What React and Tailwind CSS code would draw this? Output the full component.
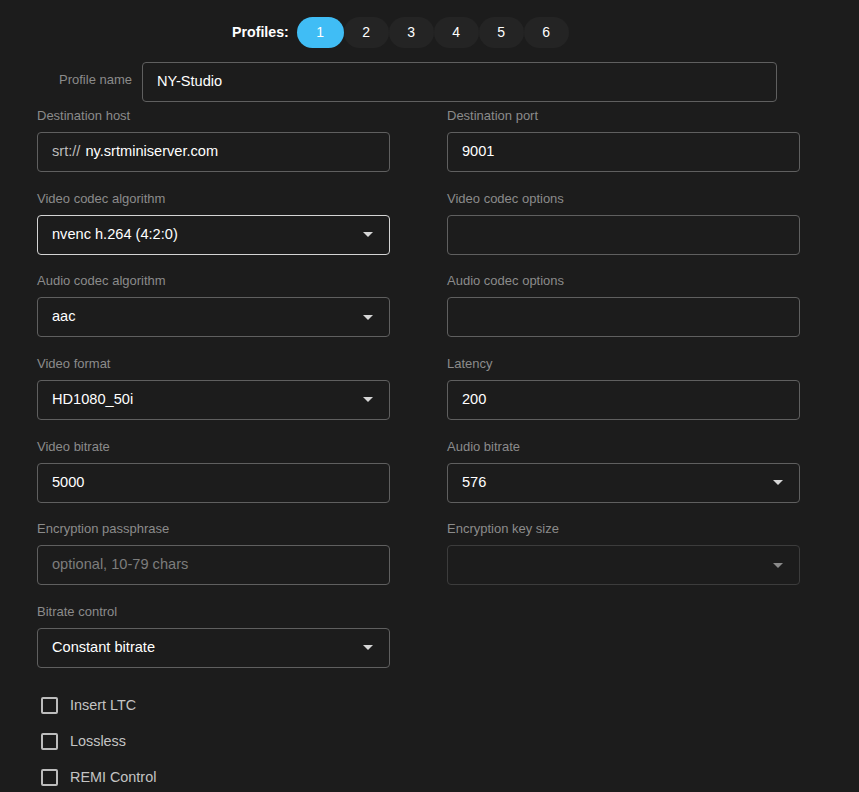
const font = { fontFamily: '"Liberation Sans", Arial, sans-serif' };

function Caret({ muted }) {
  return (
    <svg width="10" height="5" viewBox="0 0 10 5" className="shrink-0">
      <path d="M0 0 L10 0 L5 5 Z" fill={muted ? "#8a8a8a" : "#d6d6d6"} />
    </svg>
  );
}

function Field({ label, value, prefix, placeholder, select, focused, disabled }) {
  const border = focused
    ? "border-[#d4d4d4]"
    : disabled
    ? "border-[#3c3c3c]"
    : "border-[#5f5f5f]";
  return (
    <div className="flex flex-col">
      <div className="h-4 text-[13px] leading-4 text-[#8b8b8b]">{label}</div>
      <div
        className={`mt-2 h-[40px] border ${border} rounded-[4px] flex items-center pl-[14px] pr-[16px] text-[14.6px]`}
      >
        <div className="flex-1 truncate">
          {prefix && <span className="text-[#bdbdbd] mr-[5px]">{prefix}</span>}
          {value ? (
            <span className="text-white">{value}</span>
          ) : (
            <span className="text-[#7d7d7d]">{placeholder}</span>
          )}
        </div>
        {select && <Caret muted={disabled} />}
      </div>
    </div>
  );
}

function Check({ label }) {
  return (
    <div className="flex items-center h-[36px]">
      <div className="w-[17px] h-[17px] border-2 border-[#bdbdbd] rounded-[2px] ml-[4px]" />
      <span className="ml-[12px] text-[14.4px] text-[#c4c4c4]">{label}</span>
    </div>
  );
}

export default function App() {
  const profiles = ["1", "2", "3", "4", "5", "6"];
  return (
    <div className="min-h-[792px] w-[859px] bg-[#1c1c1c] text-white" style={font}>
      <div className="flex items-center pt-[17px] pl-[232px]">
        <span className="text-[14.2px] font-bold text-white mr-[8px]">Profiles:</span>
        <div className="flex">
          {profiles.map((p, i) => (
            <div
              key={p}
              className={`h-[31px] flex items-center justify-center rounded-full text-[14px] ${
                i === 0 ? "w-[47px] bg-[#40bdf5]" : "w-[45px] bg-[#242424]"
              }`}
            >
              {p}
            </div>
          ))}
        </div>
      </div>

      <div className="flex items-center mt-[14px] pl-[37px]">
        <div className="w-[95px] text-right text-[13px] text-[#8b8b8b] -mt-[4px]">Profile name</div>
        <div className="ml-[10px] w-[635px] h-[40px] border border-[#5f5f5f] rounded-[4px] flex items-center pl-[14px] text-[14.6px]">
          NY-Studio
        </div>
      </div>

      <div className="grid grid-cols-[353px_353px] gap-x-[57px] gap-y-[18.67px] pl-[37px] mt-[6px]">
        <Field label="Destination host" prefix="srt://" value="ny.srtminiserver.com" />
        <Field label="Destination port" value="9001" />
        <Field label="Video codec algorithm" value="nvenc h.264 (4:2:0)" select focused />
        <Field label="Video codec options" />
        <Field label="Audio codec algorithm" value="aac" select />
        <Field label="Audio codec options" />
        <Field label="Video format" value="HD1080_50i" select />
        <Field label="Latency" value="200" />
        <Field label="Video bitrate" value="5000" />
        <Field label="Audio bitrate" value="576" select />
        <Field label="Encryption passphrase" placeholder="optional, 10-79 chars" />
        <Field label="Encryption key size" select disabled />
        <Field label="Bitrate control" value="Constant bitrate" select />
      </div>

      <div className="pl-[37px] mt-[20px] flex flex-col">
        <Check label="Insert LTC" />
        <Check label="Lossless" />
        <Check label="REMI Control" />
      </div>
    </div>
  );
}
